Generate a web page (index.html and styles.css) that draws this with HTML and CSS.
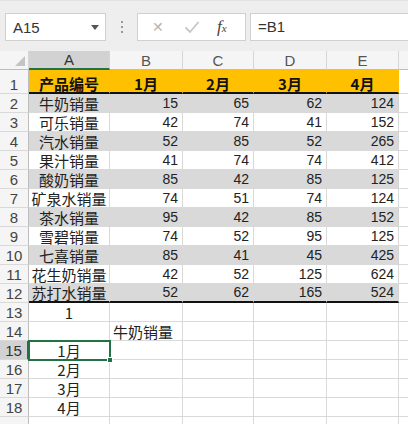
FILE: index.html
```html
<!DOCTYPE html>
<html>
    <head>
        <title>sheet</title>
        <meta charset="utf-8"/>
        <link rel="stylesheet" href="styles.css">
    </head>
    <body class="body">
        <div class="toolbar">
            <div class="namebox">
                <span>A15</span>
                <span class="arrow"></span>
            </div>
            <div class="dots"><i></i><i></i><i></i></div>
            <div class="btns">
                <span class="cancel">&#x2715;</span>
                <svg class="ok" width="16" height="14" viewBox="0 0 16 14">
                    <path d="M1.5 7.5 L6 12 L14.5 2" fill="none" stroke="#c6c6c6" stroke-width="1.8"/>
                </svg>
                <span class="fx">f<sub>x</sub></span>
            </div>
            <div class="formula">=B1</div>
        </div>
        <table class="sheet">
            <colgroup>
                <col style="width:29px"><col style="width:81px"><col style="width:73px">
                <col style="width:71px"><col style="width:73px"><col style="width:72px"><col>
            </colgroup>
            <tr class="colhead">
                <th class="corner"><span class="tri"></span></th>
                <th class="on">A</th><th>B</th><th>C</th><th>D</th><th>E</th><th class="rest"></th>
            </tr>
            <tr class="title">
                <th>1</th><td class="name">产品编号</td><td>1月</td><td>2月</td><td>3月</td><td>4月</td><td class="rest"></td>
            </tr>
            <tr class="gray"><th>2</th><td class="name">牛奶销量</td><td class="num">15</td><td class="num">65</td><td class="num">62</td><td class="num">124</td><td class="rest"></td></tr>
            <tr><th>3</th><td class="name">可乐销量</td><td class="num">42</td><td class="num">74</td><td class="num">41</td><td class="num">152</td><td class="rest"></td></tr>
            <tr class="gray"><th>4</th><td class="name">汽水销量</td><td class="num">52</td><td class="num">85</td><td class="num">52</td><td class="num">265</td><td class="rest"></td></tr>
            <tr><th>5</th><td class="name">果汁销量</td><td class="num">41</td><td class="num">74</td><td class="num">74</td><td class="num">412</td><td class="rest"></td></tr>
            <tr class="gray"><th>6</th><td class="name">酸奶销量</td><td class="num">85</td><td class="num">42</td><td class="num">85</td><td class="num">125</td><td class="rest"></td></tr>
            <tr><th>7</th><td class="name">矿泉水销量</td><td class="num">74</td><td class="num">51</td><td class="num">74</td><td class="num">124</td><td class="rest"></td></tr>
            <tr class="gray"><th>8</th><td class="name">茶水销量</td><td class="num">95</td><td class="num">42</td><td class="num">85</td><td class="num">152</td><td class="rest"></td></tr>
            <tr><th>9</th><td class="name">雪碧销量</td><td class="num">74</td><td class="num">52</td><td class="num">95</td><td class="num">125</td><td class="rest"></td></tr>
            <tr class="gray"><th>10</th><td class="name">七喜销量</td><td class="num">85</td><td class="num">41</td><td class="num">45</td><td class="num">425</td><td class="rest"></td></tr>
            <tr><th>11</th><td class="name">花生奶销量</td><td class="num">42</td><td class="num">52</td><td class="num">125</td><td class="num">624</td><td class="rest"></td></tr>
            <tr class="gray last"><th>12</th><td class="name">苏打水销量</td><td class="num">52</td><td class="num">62</td><td class="num">165</td><td class="num">524</td><td class="rest"></td></tr>
            <tr><th>13</th><td class="mid">1</td><td></td><td></td><td></td><td></td><td class="rest"></td></tr>
            <tr><th>14</th><td></td><td class="left">牛奶销量</td><td></td><td></td><td></td><td class="rest"></td></tr>
            <tr class="cur"><th>15</th><td class="mid sel">1月<span class="handle"></span></td><td></td><td></td><td></td><td></td><td class="rest"></td></tr>
            <tr><th>16</th><td class="mid">2月</td><td></td><td></td><td></td><td></td><td class="rest"></td></tr>
            <tr><th>17</th><td class="mid">3月</td><td></td><td></td><td></td><td></td><td class="rest"></td></tr>
            <tr><th>18</th><td class="mid">4月</td><td></td><td></td><td></td><td></td><td class="rest"></td></tr>
            <tr><th></th><td></td><td></td><td></td><td></td><td></td><td class="rest"></td></tr>
        </table>
    </body>
</html>
```

FILE: styles.css
```css
*{
    box-sizing:border-box;
}
.body{
    margin:0px;
    width:408px;
    height:424px;
    overflow:hidden;
    background-color:#fff;
    font-family:"Liberation Sans","Noto Sans CJK SC",sans-serif;
    color:#222;
}
.toolbar{
    display:flex;
    align-items:center;
    height:51px;
    padding:0 0 0 5px;
    background-color:#eeeeee;
    border-top:1px solid #e2e2e2;
}
.namebox{
    display:flex;
    align-items:center;
    justify-content:space-between;
    width:101px;
    height:28px;
    margin-top:2px;
    padding:0 6px 0 7px;
    background-color:#fff;
    border:1px solid #d0d0d0;
    font-size:15px;
    color:#333;
}
.arrow{
    width:0;
    height:0;
    border-left:4px solid transparent;
    border-right:4px solid transparent;
    border-top:5px solid #555;
}
.dots{
    display:flex;
    flex-direction:column;
    align-items:center;
    gap:3px;
    width:31px;
    margin-top:2px;
}
.dots i{
    width:2px;
    height:2px;
    background-color:#999;
}
.btns{
    display:flex;
    align-items:center;
    width:109px;
    height:28px;
    margin-top:2px;
    padding-left:14px;
    background-color:#fff;
    border:1px solid #d0d0d0;
}
.cancel{
    font-size:14px;
    color:#b4b4b4;
    width:32px;
}
.ok{
    margin-right:17px;
}
.fx{
    font-family:"Liberation Serif",serif;
    font-style:italic;
    font-size:17px;
    color:#444;
}
.fx sub{
    font-size:11px;
    vertical-align:0;
}
.formula{
    flex:1;
    height:28px;
    margin-top:2px;
    margin-left:4px;
    padding:4px 7px;
    background-color:#fff;
    border:1px solid #d0d0d0;
    border-right:none;
    font-size:15px;
    color:#333;
}
.sheet{
    table-layout:fixed;
    width:408px;
    border-collapse:separate;
    border-spacing:0;
}
.sheet th,.sheet td{
    padding:0;
    height:19px;
    border-right:1px solid #d9d9d9;
    border-bottom:1px solid #d9d9d9;
    font-weight:normal;
    white-space:nowrap;
    overflow:visible;
    line-height:17px;
    vertical-align:bottom;
}
.sheet th{
    background-color:#f5f5f5;
    color:#444;
    font-size:15px;
    text-align:center;
    border-right-color:#bdbdbd;
}
.colhead th{
    height:18px;
    border-right-color:#d6d6d6;
    border-bottom:1px solid #bdbdbd;
    color:#555;
    font-size:15px;
    vertical-align:middle;
}
.colhead th.on{
    background-color:#d2d2d2;
    color:#333;
    border-bottom:2px solid #217346;
}
.colhead th.rest{
    border-right:none;
}
.corner{
    position:relative;
}
.tri{
    position:absolute;
    right:3px;
    bottom:3px;
    width:0;
    height:0;
    border-left:10px solid transparent;
    border-bottom:10px solid #c4c4c4;
}
.sheet td{
    font-size:14px;
    text-align:center;
    color:#222;
}
.sheet td.name,.sheet td.mid,.sheet td.left{
    font-family:"Noto Sans CJK SC",sans-serif;
    font-size:15px;
}
.sheet td.num{
    text-align:right;
    padding-right:4px;
}
.sheet td.left{
    text-align:left;
    padding-left:3px;
}
.sheet td.rest{
    border-right:none;
}
.title td,.title th{
    height:24px;
    border-bottom:2px solid #111;
}
.title td{
    background-color:#ffc000;
    border-right-color:#ffc000;
    font-family:"Noto Sans CJK SC",sans-serif;
    font-weight:bold;
    font-size:15px;
    color:#111;
}
.title th{
    border-bottom:1px solid #d9d9d9;
}
.title td.rest{
    background-color:#fff;
    border-bottom:1px solid #d9d9d9;
}
.gray td{
    background-color:#d9d9d9;
    border-right-color:#d9d9d9;
}
.gray td.rest{
    background-color:#fff;
    border-right:none;
}
.gray td:nth-child(6){
    border-right-color:#d4d4d4;
}
.last td{
    border-bottom:2px solid #111;
}
.last td.rest{
    border-bottom:1px solid #d9d9d9;
}
.cur th{
    background-color:#d2d2d2;
    color:#333;
    border-right:2px solid #217346;
}
.sel{
    position:relative;
    outline:2px solid #217346;
    outline-offset:-1px;
}
.handle{
    position:absolute;
    right:-4px;
    bottom:-4px;
    width:6px;
    height:6px;
    background-color:#217346;
    border:1px solid #fff;
}
```
